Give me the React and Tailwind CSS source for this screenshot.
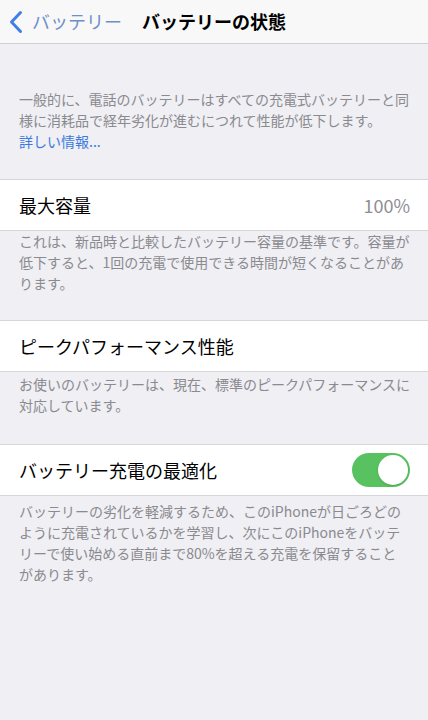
import React, { useState } from "react";

const font = { fontFamily: '"Noto Sans CJK JP", "Noto Sans", sans-serif' };

const Row = ({ children }) => (
  <div className="flex items-center justify-between h-[52px] bg-white border-y border-[#d6d6da] pl-[19px] pr-[18px]">
    {children}
  </div>
);

const Footer = ({ children, className = "" }) => (
  <p className={"pl-[19px] pr-[15px] text-[14px] leading-[21px] text-[#8a8a8f] " + className}>
    {children}
  </p>
);

const App = () => {
  const [optimized, setOptimized] = useState(true);

  return (
    <div className="min-h-[720px] bg-[#efeff4] text-black" style={font}>
      <div className="flex items-center h-[44px] bg-[#f8f8f8] border-b border-[#d0d0d4]">
        <button className="flex items-center pl-[9px] text-[#3f7fe6]">
          <svg width="14" height="24" viewBox="0 0 14 24" fill="none">
            <path
              d="M11.5 2.5 L2.5 12 L11.5 21.5"
              stroke="currentColor"
              strokeWidth="3"
              strokeLinecap="round"
              strokeLinejoin="round"
            />
          </svg>
          <span className="ml-[9px] text-[18px] text-[#6f8fc9]">バッテリー</span>
        </button>
        <h1 className="ml-[20px] text-[18px] font-bold">バッテリーの状態</h1>
      </div>

      <Footer className="pt-[45px] pb-[27px] leading-[19px]">
        一般的に、電話のバッテリーはすべての充電式バッテリーと同様に消耗品で経年劣化が進むにつれて性能が低下します。
        <br />
        <span className="text-[#3a7ae0]">詳しい情報...</span>
      </Footer>

      <Row>
        <span className="text-[18px]">最大容量</span>
        <span className="text-[18px] text-[#8e8e93]">100%</span>
      </Row>
      <Footer className="pb-[26px]">
        これは、新品時と比較したバッテリー容量の基準です。容量が低下すると、1回の充電で使用できる時間が短くなることがあります。
      </Footer>

      <Row>
        <span className="text-[18px]">ピークパフォーマンス性能</span>
      </Row>
      <Footer className="pt-[2px] pb-[28px]">
        お使いのバッテリーは、現在、標準のピークパフォーマンスに対応しています。
      </Footer>

      <Row>
        <span className="text-[18px]">バッテリー充電の最適化</span>
        <button
          onClick={() => setOptimized(!optimized)}
          className={
            "relative w-[58px] h-[34px] rounded-full transition-colors " +
            (optimized ? "bg-[#58c260]" : "bg-[#e5e5ea]")
          }
        >
          <span
            className={
              "absolute top-[2px] w-[30px] h-[30px] rounded-full bg-white shadow transition-all " +
              (optimized ? "left-[26px]" : "left-[2px]")
            }
          />
        </button>
      </Row>
      <Footer className="pt-[5px] leading-[20.7px]">
        バッテリーの劣化を軽減するため、このiPhoneが日ごろどのように充電されているかを学習し、次にこのiPhoneをバッテリーで使い始める直前まで80%を超える充電を保留すること
        <br />
        があります。
      </Footer>
    </div>
  );
};

export default App;
